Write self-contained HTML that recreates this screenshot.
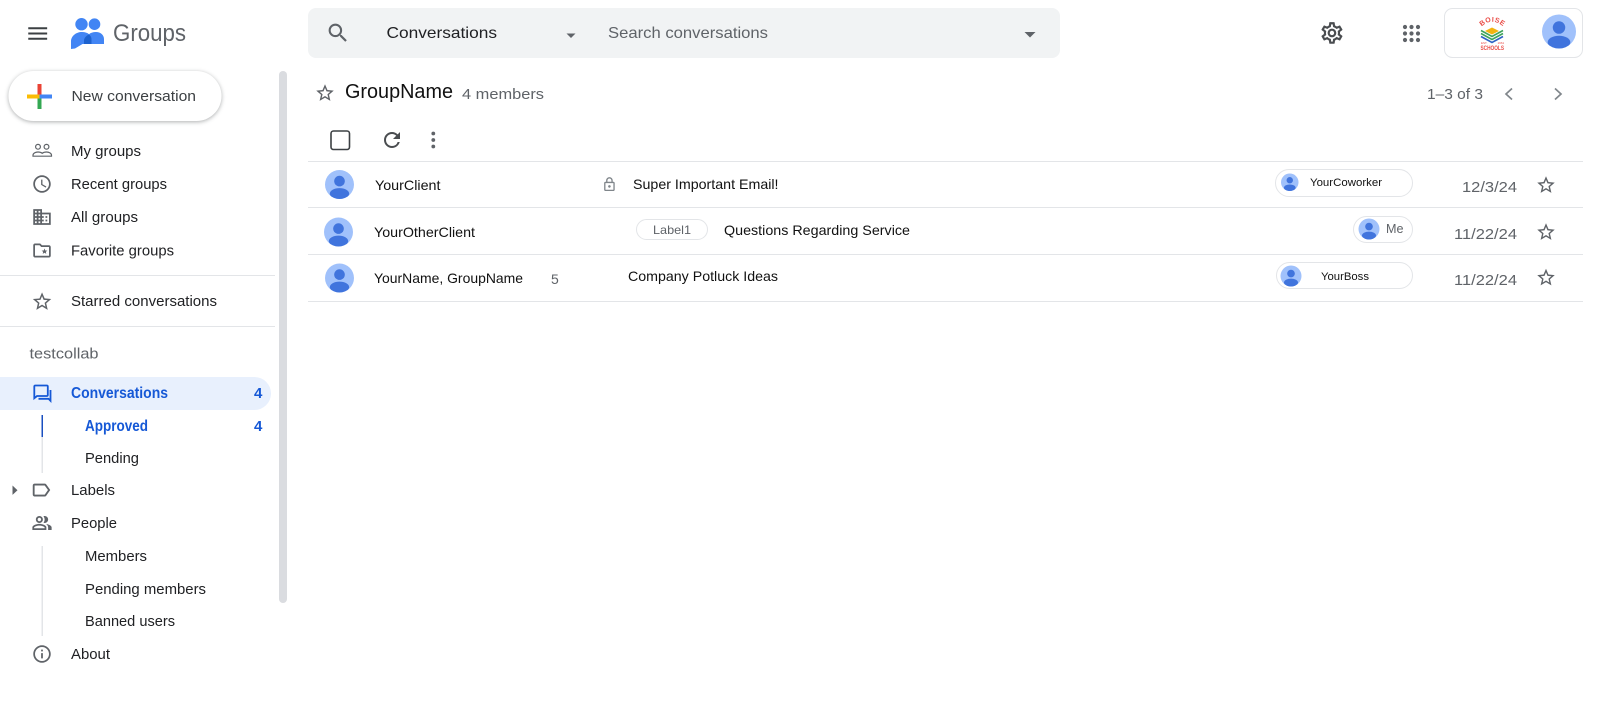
<!DOCTYPE html>
<html lang="en"><head><meta charset="utf-8"><title>Groups</title>
<style>
html,body{margin:0;padding:0;background:#fff;width:1600px;height:724px;overflow:hidden}
svg{display:block}
text{font-family:"Liberation Sans",sans-serif;white-space:pre}
.n{font-size:15px;fill:#202124}
.k{font-size:14px;fill:#111}
</style></head><body>
<svg width="1600" height="724" viewBox="0 0 1600 724" xmlns="http://www.w3.org/2000/svg">
<defs>
<path id="star" d="M22 9.24l-7.19-.62L12 2 9.19 8.63 2 9.24l5.46 4.73L5.82 21 12 17.27 18.18 21l-1.63-7.03L22 9.24zM12 15.4l-3.76 2.27 1-4.28-3.32-2.88 4.38-.38L12 6.1l1.71 4.04 4.38.38-3.32 2.88 1 4.28L12 15.4z"/>
<clipPath id="avc"><circle cx="12" cy="12" r="12"/></clipPath>
<g id="av"><circle cx="12" cy="12" r="12" fill="#a0c1fb"/><circle cx="12" cy="9.2" r="4.4" fill="#4074dd"/><ellipse cx="12" cy="19.6" rx="8" ry="4.6" fill="#4074dd" clip-path="url(#avc)"/></g>
<path id="arc" d="M1480 28Q1492 15.500 1505 28"/>
</defs>

<!-- header -->
<path transform="translate(25.100,20.900) scale(1.050)" fill="#3c4043" d="M3 18h18v-2H3v2zm0-5h18v-2H3v2zm0-7v2h18V6H3z"/>
<circle cx="81.500" cy="24.200" r="6.200" fill="#4285f4"/><circle cx="94.500" cy="24.200" r="5.800" fill="#4285f4"/>
<path fill="#4285f4" d="M71 49V41.500C71 36 76 32 82 32c3 0 5.500 .8 7 2.200C90.500 32.800 93 32 96 32c4.500 0 8 3 8 7v5H82.500l-7.500 4.500z"/>
<path fill="#1d62cf" d="M88.800 34.400c-2.500 1.500-4.800 3.600-4.800 6.100V44h7.500v-5c0-2-1.200-3.500-2.700-4.600z"/>
<text x="113" y="41" font-size="24" fill="#5f6368" textLength="73" lengthAdjust="spacingAndGlyphs">Groups</text>

<rect x="308" y="8" width="752" height="50" rx="8" fill="#f1f3f4"/>
<path transform="translate(325.500,20.500) scale(1.040)" fill="#5f6368" d="M15.500 14h-.79l-.28-.27A6.471 6.471 0 0 0 16 9.500 6.500 6.500 0 1 0 9.500 16c1.610 0 3.090-.59 4.230-1.570l.27.28v.79l5 4.990L20.490 19l-4.990-5zm-6 0C7.010 14 5 11.990 5 9.500S7.010 5 9.500 5 14 7.010 14 9.500 11.990 14 9.500 14z"/>
<text x="386.500" y="38" font-size="16" fill="#202124" textLength="110.500" lengthAdjust="spacingAndGlyphs">Conversations</text>
<path d="M566.500 33.500h9l-4.500 4.500z" fill="#5f6368"/>
<text x="608" y="38" font-size="16" fill="#5f6368" textLength="160" lengthAdjust="spacingAndGlyphs">Search conversations</text>
<path d="M1024.500 32h11l-5.500 5.500z" fill="#5f6368"/>

<path transform="translate(1319,20) scale(1.080)" fill="#4a4d50" d="M19.430 12.980c.04-.32.07-.64.07-.98 0-.34-.03-.66-.07-.98l2.110-1.650c.19-.15.24-.42.12-.64l-2-3.460c-.09-.16-.26-.25-.44-.25-.06 0-.12.01-.17.03l-2.490 1c-.52-.4-1.080-.73-1.690-.98l-.38-2.650C14.460 2.180 14.250 2 14 2h-4c-.25 0-.46.18-.49.42l-.38 2.650c-.61.25-1.170.59-1.690.98l-2.490-1c-.06-.02-.12-.03-.18-.03-.17 0-.34.09-.43.25l-2 3.460c-.13.22-.07.49.12.64l2.110 1.650c-.04.32-.07.65-.07.98 0 .33.03.66.07.98l-2.110 1.650c-.19.15-.24.42-.12.64l2 3.460c.09.16.26.25.44.25.06 0 .12-.01.17-.03l2.490-1c.52.4 1.080.73 1.690.98l.38 2.650c.03.24.24.42.49.42h4c.25 0 .46-.18.49-.42l.38-2.650c.61-.25 1.170-.59 1.690-.98l2.490 1c.06.02.12.03.18.03.17 0 .34-.09.43-.25l2-3.460c.12-.22.07-.49-.12-.64l-2.110-1.650zm-1.980-1.710c.04.31.05.52.05.73 0 .21-.02.43-.05.73l-.14 1.130.89.7 1.080.84-.7 1.210-1.270-.51-1.040-.42-.9.68c-.43.32-.84.56-1.250.73l-1.060.43-.16 1.130-.2 1.350h-1.400l-.19-1.350-.16-1.130-1.060-.43c-.43-.18-.83-.41-1.230-.71l-.91-.7-1.060.43-1.270.51-.7-1.210 1.080-.84.89-.7-.14-1.130c-.03-.31-.05-.54-.05-.74s.02-.43.05-.73l.14-1.130-.89-.7-1.080-.84.7-1.210 1.270.51 1.040.42.9-.68c.43-.32.84-.56 1.250-.73l1.060-.43.16-1.130.2-1.350h1.390l.19 1.350.16 1.130 1.060.43c.43.18.83.41 1.230.71l.91.7 1.060-.43 1.270-.51.7 1.210-1.070.85-.89.7.14 1.130zM12 8c-2.210 0-4 1.790-4 4s1.790 4 4 4 4-1.790 4-4-1.790-4-4-4zm0 6c-1.100 0-2-.9-2-2s.9-2 2-2 2 .9 2 2-.9 2-2 2z"/>
<g fill="#5f6368"><circle cx="1405" cy="27" r="2.100"/><circle cx="1411.500" cy="27" r="2.100"/><circle cx="1418" cy="27" r="2.100"/><circle cx="1405" cy="33.500" r="2.100"/><circle cx="1411.500" cy="33.500" r="2.100"/><circle cx="1418" cy="33.500" r="2.100"/><circle cx="1405" cy="40" r="2.100"/><circle cx="1411.500" cy="40" r="2.100"/><circle cx="1418" cy="40" r="2.100"/></g>

<rect x="1444.500" y="8.500" width="138" height="49" rx="8" fill="#fff" stroke="#e3e5e8"/>
<text font-size="7" font-weight="700" fill="#ea4c46"><textPath href="#arc" startOffset="2" textLength="24">BOISE</textPath></text>
<path d="M1485 31l7-3.500 7 3.500-7 3.500z" fill="#f2b40f"/>
<path d="M1481 30.500l11 6 11-6M1481 33.500l11 6 11-6" fill="none" stroke="#3ea35a" stroke-width="1.600"/>
<path d="M1481 36.500l11 6 11-6" fill="none" stroke="#2d62c4" stroke-width="1.600"/>
<text x="1481" y="44" font-size="3" fill="#ea4c46">EST.</text>
<text x="1497.500" y="44" font-size="3" fill="#ea4c46">1961</text>
<text x="1480.500" y="50" font-size="6.500" font-weight="700" fill="#ea4c46" textLength="23.500" lengthAdjust="spacingAndGlyphs">SCHOOLS</text>
<use href="#av" transform="translate(1542,14.500) scale(1.417)"/>

<!-- sidebar -->
<rect x="8.500" y="71" width="213" height="50" rx="25" fill="#fff" style="filter:drop-shadow(0 1px 2px rgba(60,64,67,.42))"/>
<rect x="37.500" y="84" width="4" height="13" fill="#ea4335"/>
<rect x="37.500" y="96" width="4" height="13" fill="#34a853"/>
<rect x="27" y="94.500" width="12.500" height="4" fill="#fbbc04"/>
<rect x="39.500" y="94.500" width="12.500" height="4" fill="#4285f4"/>
<text x="71.500" y="101" class="n" style="fill:#3c4043" textLength="124.500" lengthAdjust="spacingAndGlyphs">New conversation</text>

<rect x="279" y="71" width="8" height="532" rx="4" fill="#dadce0"/>

<g fill="none" stroke="#5f6368" stroke-width="1.200"><circle cx="38" cy="146.800" r="2.400"/><circle cx="46.500" cy="146.800" r="2.400"/><path d="M33 156.200v-1c0-2 2.500-3.200 5-3.200 1.600 0 3.200.5 4.200 1.300 1-.8 2.600-1.300 4.300-1.300 2.500 0 5 1.200 5 3.200v1z"/></g>
<text x="71" y="156" class="n" textLength="70" lengthAdjust="spacingAndGlyphs">My groups</text>

<path transform="translate(31.500,173.500) scale(.875)" fill="#5f6368" d="M11.990 2C6.470 2 2 6.480 2 12s4.470 10 9.990 10C17.520 22 22 17.520 22 12S17.520 2 11.990 2zM12 20c-4.420 0-8-3.580-8-8s3.580-8 8-8 8 3.580 8 8-3.580 8-8 8zm.5-13H11v6l5.250 3.150.75-1.230-4.500-2.670z"/>
<text x="71" y="189" class="n" textLength="96" lengthAdjust="spacingAndGlyphs">Recent groups</text>

<path transform="translate(31.500,206.500) scale(.875)" fill="#5f6368" d="M12 7V3H2v18h20V7H12zM6 19H4v-2h2v2zm0-4H4v-2h2v2zm0-4H4V9h2v2zm0-4H4V5h2v2zm4 12H8v-2h2v2zm0-4H8v-2h2v2zm0-4H8V9h2v2zm0-4H8V5h2v2zm10 12h-8v-2h2v-2h-2v-2h2v-2h-2V9h8v10zm-2-8h-2v2h2v-2zm0 4h-2v2h2v-2z"/>
<text x="71" y="222" class="n" textLength="67" lengthAdjust="spacingAndGlyphs">All groups</text>

<path transform="translate(31.500,240) scale(.875)" fill="#5f6368" d="M20 6h-8l-2-2H4c-1.100 0-2 .9-2 2v12c0 1.100.9 2 2 2h16c1.100 0 2-.9 2-2V8c0-1.100-.9-2-2-2zm0 12H4V6h5.170l2 2H20v10z"/>
<path d="M44.500 248.500l.8 2 2.100.1-1.600 1.300.5 2-1.800-1.100-1.800 1.100.5-2-1.600-1.300 2.100-.1z" fill="#5f6368"/>
<text x="71" y="255.500" class="n" textLength="103" lengthAdjust="spacingAndGlyphs">Favorite groups</text>

<rect x="0" y="275" width="275" height="1" fill="#e3e5e8"/>
<use href="#star" fill="#5f6368" transform="translate(31,290.500) scale(.92)"/>
<text x="71" y="306" class="n" textLength="146" lengthAdjust="spacingAndGlyphs">Starred conversations</text>
<rect x="0" y="326" width="275" height="1" fill="#e3e5e8"/>

<text x="29.500" y="358.500" font-size="14.500" fill="#5f6368" textLength="69" lengthAdjust="spacingAndGlyphs">testcollab</text>

<path d="M0 377H254.500a16.500 16.500 0 0 1 0 33H0z" fill="#e8f0fd"/>
<g fill="none" stroke="#1558d6" stroke-width="1.800"><path d="M34.300 386.500a1 1 0 0 1 1-1h11.500a1 1 0 0 1 1 1v8.500a1 1 0 0 1-1 1H37l-2.700 2.200z"/><path d="M38.500 398.800H48.500l2 2V390"/></g>
<text x="71" y="398" font-size="15.500" font-weight="700" fill="#1558d6" textLength="97" lengthAdjust="spacingAndGlyphs">Conversations</text>
<text x="254" y="398" font-size="15" font-weight="700" fill="#1558d6" textLength="8">4</text>

<rect x="41.500" y="415" width="1.500" height="22" fill="#1a4fc0"/>
<rect x="41.500" y="437" width="1.500" height="36" fill="#e3e5e8"/>
<text x="85" y="431" font-size="15.500" font-weight="700" fill="#1558d6" textLength="63" lengthAdjust="spacingAndGlyphs">Approved</text>
<text x="254" y="431" font-size="15" font-weight="700" fill="#1558d6" textLength="8">4</text>
<text x="85" y="463" class="n" textLength="54" lengthAdjust="spacingAndGlyphs">Pending</text>

<path d="M12.500 485.500l5 4.700-5 4.700z" fill="#5f6368"/>
<path transform="translate(30,479) scale(.92)" fill="#5f6368" d="M17.630 5.840C17.270 5.330 16.670 5 16 5L5 5.010C3.900 5.010 3 5.900 3 7v10c0 1.100.9 1.990 2 1.990L16 19c.67 0 1.270-.33 1.630-.84L22 12l-4.370-6.160zM16 17H5V7h11l3.550 5L16 17z"/>
<text x="71" y="495" class="n" textLength="44" lengthAdjust="spacingAndGlyphs">Labels</text>

<path transform="translate(31.500,512.500) scale(.875)" fill="#5f6368" d="M16.670 13.130C18.040 14.060 19 15.320 19 17v3h4v-3c0-2.180-3.570-3.470-6.330-3.870zM15 12c2.210 0 4-1.790 4-4s-1.790-4-4-4c-.47 0-.91.1-1.330.24C14.500 5.270 15 6.580 15 8s-.5 2.730-1.330 3.760c.42.14.86.24 1.330.24zM9 12c2.210 0 4-1.790 4-4s-1.790-4-4-4-4 1.790-4 4 1.790 4 4 4zm0-6c1.100 0 2 .9 2 2s-.9 2-2 2-2-.9-2-2 .9-2 2-2zM9 13c-2.670 0-8 1.340-8 4v3h16v-3c0-2.660-5.330-4-8-4zm6 5H3v-.99C3.200 16.290 6.300 15 9 15s5.800 1.290 6 2v1z"/>
<text x="71" y="528" class="n" textLength="46" lengthAdjust="spacingAndGlyphs">People</text>
<rect x="41.500" y="546" width="1.500" height="90" fill="#e3e5e8"/>
<text x="85" y="561" class="n" textLength="62" lengthAdjust="spacingAndGlyphs">Members</text>
<text x="85" y="594" class="n" textLength="121" lengthAdjust="spacingAndGlyphs">Pending members</text>
<text x="85" y="626" class="n" textLength="90" lengthAdjust="spacingAndGlyphs">Banned users</text>
<path transform="translate(31.500,643.500) scale(.875)" fill="#5f6368" d="M11 7h2v2h-2zm0 4h2v6h-2zm1-9C6.480 2 2 6.480 2 12s4.480 10 10 10 10-4.480 10-10S17.520 2 12 2zm0 18c-4.410 0-8-3.590-8-8s3.590-8 8-8 8 3.590 8 8-3.590 8-8 8z"/>
<text x="71" y="659" class="n" textLength="39" lengthAdjust="spacingAndGlyphs">About</text>

<!-- content header -->
<use href="#star" fill="#5f6368" transform="translate(314.500,82.500) scale(.875)"/>
<text x="345" y="98" font-size="20" fill="#111" textLength="108" lengthAdjust="spacingAndGlyphs">GroupName</text>
<text x="462" y="99" font-size="15" fill="#5f6368" textLength="82" lengthAdjust="spacingAndGlyphs">4 members</text>
<text x="1427" y="99" font-size="15" fill="#5f6368" textLength="56" lengthAdjust="spacingAndGlyphs">1–3 of 3</text>
<path d="M1512 88.500l-6 5.500 6 5.500" fill="none" stroke="#80868b" stroke-width="1.700"/>
<path d="M1555 88.500l6 5.500-6 5.500" fill="none" stroke="#80868b" stroke-width="1.700"/>

<rect x="331" y="131" width="18.500" height="18.500" rx="2.500" fill="none" stroke="#3c4043" stroke-width="1.600"/>
<path transform="translate(380,128) scale(1)" fill="#4a4d50" d="M17.650 6.350A7.958 7.958 0 0 0 12 4c-4.420 0-7.990 3.580-7.990 8s3.570 8 7.990 8c3.730 0 6.840-2.550 7.730-6h-2.080A5.990 5.990 0 0 1 12 18c-3.310 0-6-2.690-6-6s2.690-6 6-6c1.660 0 3.140.69 4.220 1.780L13 11h7V4l-2.350 2.350z"/>
<g fill="#5f6368"><circle cx="433.300" cy="133.500" r="1.900"/><circle cx="433.300" cy="140" r="1.900"/><circle cx="433.300" cy="146.500" r="1.900"/></g>

<!-- rows -->
<rect x="308" y="161" width="1275" height="1" fill="#e3e5e8"/>
<rect x="308" y="207" width="1275" height="1" fill="#e3e5e8"/>
<rect x="308" y="254" width="1275" height="1" fill="#e3e5e8"/>
<rect x="308" y="301" width="1275" height="1" fill="#e3e5e8"/>

<use href="#av" transform="translate(325,170) scale(1.208)"/>
<text x="375" y="190" class="k" textLength="65.500" lengthAdjust="spacingAndGlyphs">YourClient</text>
<path transform="translate(601.500,176.500) scale(.66)" fill="#80868b" d="M18 8h-1V6c0-2.760-2.240-5-5-5S7 3.240 7 6v2H6c-1.100 0-2 .9-2 2v10c0 1.100.9 2 2 2h12c1.100 0 2-.9 2-2V10c0-1.100-.9-2-2-2zM9 6c0-1.660 1.340-3 3-3s3 1.340 3 3v2H9V6zm9 14H6V10h12v10zm-6-3c1.100 0 2-.9 2-2s-.9-2-2-2-2 .9-2 2 .9 2 2 2z"/>
<text x="633" y="189" class="k" textLength="145.500" lengthAdjust="spacingAndGlyphs">Super Important Email!</text>
<rect x="1275.500" y="169.500" width="137" height="27" rx="13.500" fill="#fff" stroke="#e3e5e8"/>
<use href="#av" transform="translate(1281,173.500) scale(.73)"/>
<text x="1310" y="186" font-size="11" fill="#111" textLength="72" lengthAdjust="spacingAndGlyphs">YourCoworker</text>
<text x="1462" y="192" font-size="15" fill="#5f6368" textLength="55" lengthAdjust="spacingAndGlyphs">12/3/24</text>
<use href="#star" fill="#5f6368" transform="translate(1535.500,174.500) scale(.875)"/>

<use href="#av" transform="translate(324,217.500) scale(1.208)"/>
<text x="374" y="237" class="k" textLength="101" lengthAdjust="spacingAndGlyphs">YourOtherClient</text>
<rect x="636.500" y="219.500" width="71" height="20" rx="10" fill="#fff" stroke="#e3e5e8"/>
<text x="653" y="234" font-size="12" fill="#5f6368" textLength="38" lengthAdjust="spacingAndGlyphs">Label1</text>
<text x="724" y="235" class="k" textLength="186" lengthAdjust="spacingAndGlyphs">Questions Regarding Service</text>
<rect x="1353.500" y="216.500" width="59" height="26" rx="13" fill="#fff" stroke="#e3e5e8"/>
<use href="#av" transform="translate(1358.500,218.500) scale(.875)"/>
<text x="1386" y="233" font-size="12.500" fill="#5f6368" textLength="17.500" lengthAdjust="spacingAndGlyphs">Me</text>
<text x="1454" y="239" font-size="15" fill="#5f6368" textLength="63" lengthAdjust="spacingAndGlyphs">11/22/24</text>
<use href="#star" fill="#5f6368" transform="translate(1535.500,221.500) scale(.875)"/>

<use href="#av" transform="translate(325,263.500) scale(1.208)"/>
<text x="374" y="283" class="k" textLength="149" lengthAdjust="spacingAndGlyphs">YourName, GroupName</text>
<text x="551" y="284" font-size="14" fill="#5f6368" textLength="8">5</text>
<text x="628" y="281" class="k" textLength="150" lengthAdjust="spacingAndGlyphs">Company Potluck Ideas</text>
<rect x="1276.500" y="262.500" width="136" height="26" rx="13" fill="#fff" stroke="#e3e5e8"/>
<use href="#av" transform="translate(1280.500,265.500) scale(.875)"/>
<text x="1321" y="280" font-size="11" fill="#111" textLength="48" lengthAdjust="spacingAndGlyphs">YourBoss</text>
<text x="1454" y="285" font-size="15" fill="#5f6368" textLength="63" lengthAdjust="spacingAndGlyphs">11/22/24</text>
<use href="#star" fill="#5f6368" transform="translate(1535.500,267) scale(.875)"/>
</svg>
</body></html>
